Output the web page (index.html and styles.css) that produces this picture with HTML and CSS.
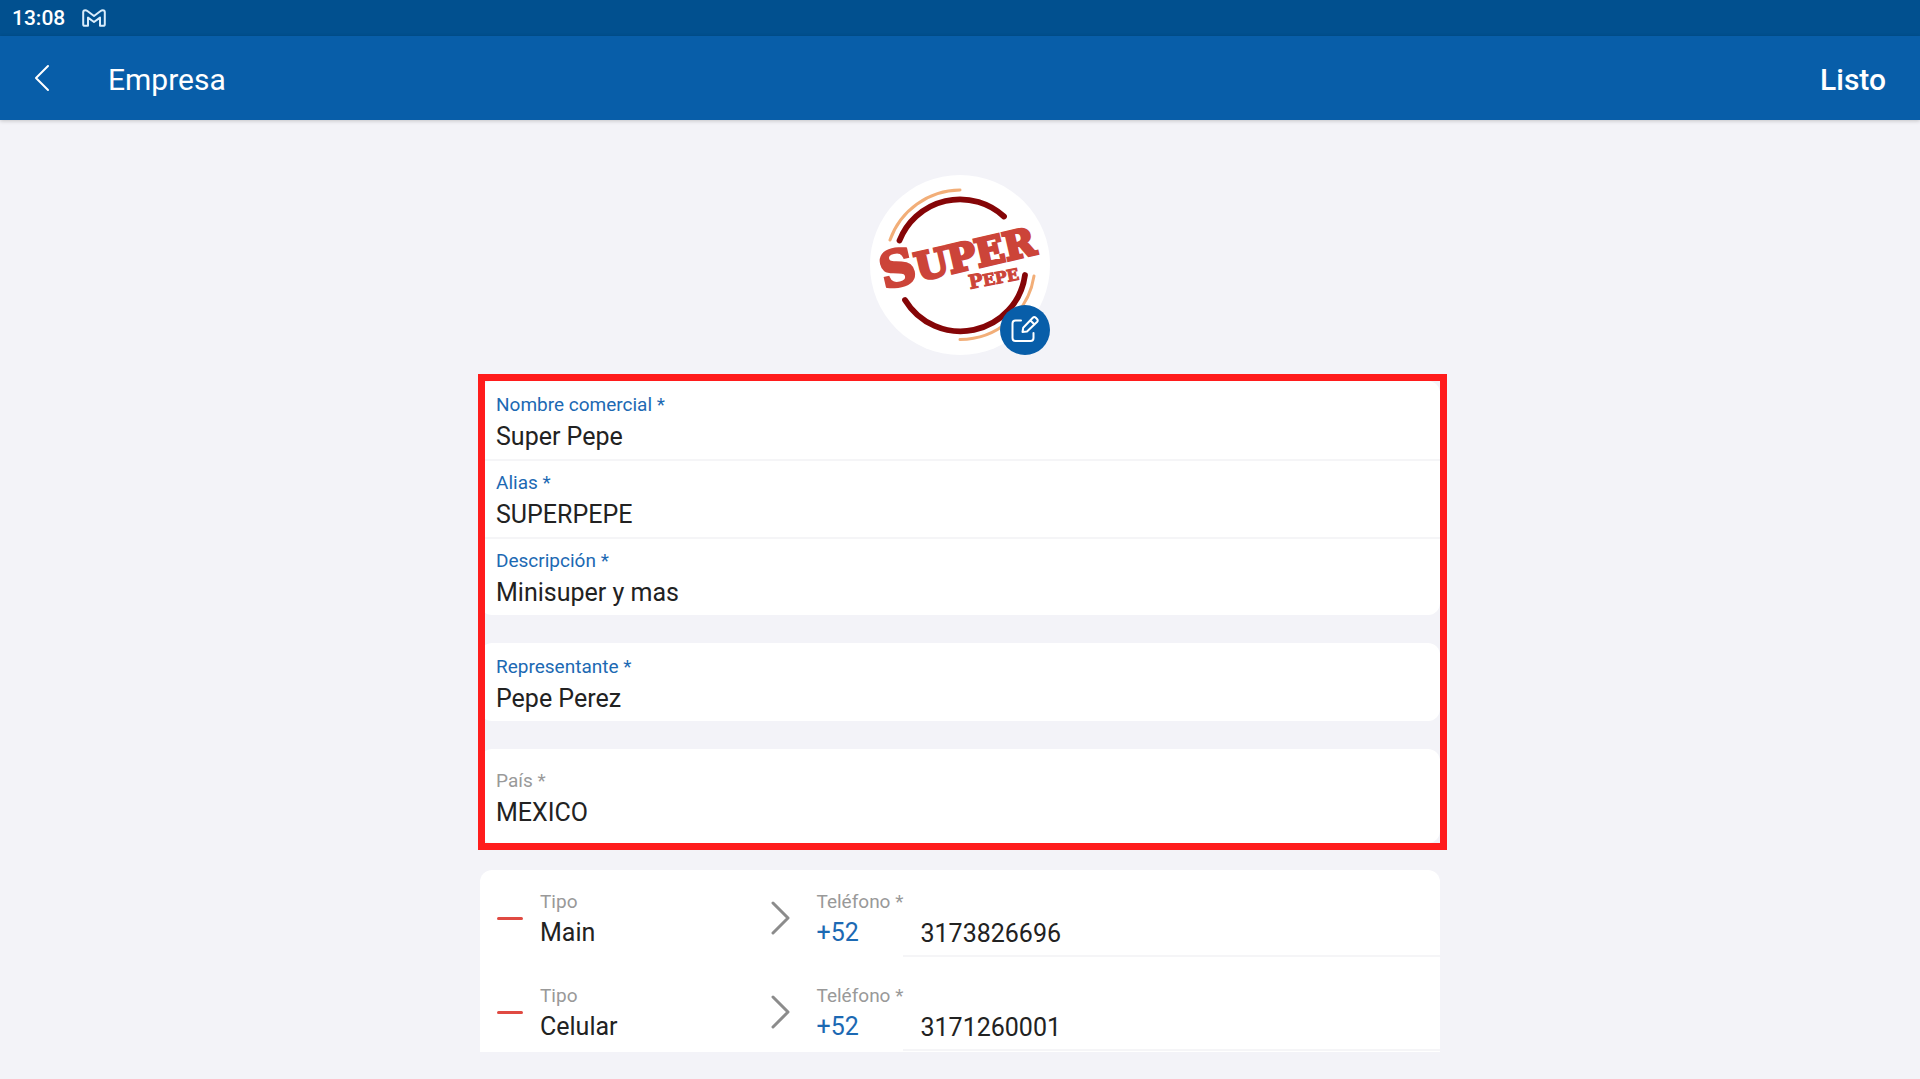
FILE: index.html
```html
<!DOCTYPE html>
<html lang="es">
<head>
    <meta charset="UTF-8">
    <meta name="viewport" content="width=device-width, initial-scale=1.0">
    <title>Empresa</title>
    <link rel="stylesheet" href="styles.css">
</head>
<body>
    <div class="status-bar">
        <span>13:08</span>
        <svg width="24" height="18" viewBox="0 0 24 18" aria-hidden="true">
            <path d="M1.2 3.2Q1.2 1.2 3.2 1.2Q4.4 1.2 5.4 2L12 7L18.6 2Q19.6 1.2 20.8 1.2Q22.8 1.2 22.8 3.2V15.2Q22.8 16.8 21.2 16.8H18V8.6L12 13L6 8.6V16.8H2.8Q1.2 16.8 1.2 15.2Z"/>
        </svg>
    </div>

    <header class="top-bar">
        <button type="button" class="back" aria-label="Volver">
            <svg width="16" height="28" viewBox="0 0 16 28"><path d="M14 2L2 14L14 26"/></svg>
        </button>
        <h1>Empresa</h1>
        <button type="submit" form="companyForm" class="done">Listo</button>
    </header>

    <main>
        <div class="avatar">
            <svg class="logo" viewBox="10 15 180 180" role="img" aria-label="Super Pepe">
                <circle cx="100" cy="105" r="90" fill="#fff"/>
                <g fill="none" stroke-linecap="round">
                    <path d="M39.5 80.5A65 65 0 0 1 144 56.5M45 140A65 65 0 0 0 165 115" stroke="#850507" stroke-width="5.8"/>
                    <path d="M30 80A75 75 0 0 1 100 30M100 179.500A75 75 0 0 0 174 116" stroke="#f2ae78" stroke-width="3"/>
                </g>
                <g class="logo-text">
                    <text transform="translate(24 129) rotate(-13)"><tspan font-size="49">S</tspan><tspan font-size="38">UPER</tspan></text>
                    <text transform="translate(110 129) rotate(-11)" class="small"><tspan font-size="19">P</tspan><tspan font-size="16">EPE</tspan></text>
                </g>
            </svg>
            <button type="button" class="edit" aria-label="Editar logo">
                <svg width="30" height="30" viewBox="0 0 30 30">
                    <path d="M11 5.500H5.500Q2.500 5.500 2.500 8.500V23Q2.500 26 5.500 26H20.500Q23.500 26 23.500 23V18"/>
                    <path d="M12.500 17L13.200 12.800L22.800 2.800Q24.300 1.300 25.800 2.800L27 4Q28.500 5.500 27 7L17 16.500ZM20.500 5.500L24.500 9.500"/>
                </svg>
            </button>
        </div>

        <form id="companyForm">
            <!-- General data -->
            <div class="highlight">
                <div class="card">
                    <div class="field">
                        <label for="name">Nombre comercial *</label>
                        <input type="text" id="name" value="Super Pepe">
                    </div>
                    <div class="field">
                        <label for="alias">Alias *</label>
                        <input type="text" id="alias" value="SUPERPEPE">
                    </div>
                    <div class="field">
                        <label for="description">Descripción *</label>
                        <input type="text" id="description" value="Minisuper y mas">
                    </div>
                </div>
                <div class="card">
                    <div class="field">
                        <label for="owner">Representante *</label>
                        <input type="text" id="owner" value="Pepe Perez">
                    </div>
                </div>
                <div class="card country">
                    <div class="field muted">
                        <label for="country">País *</label>
                        <input type="text" id="country" value="MEXICO">
                    </div>
                </div>
            </div>

            <!-- Phones -->
            <div class="card phones">
                <div class="phone">
                    <button type="button" class="remove" aria-label="Quitar teléfono"></button>
                    <div class="type muted">
                        <label for="type1">Tipo</label>
                        <select id="type1"><option>Main</option><option>Celular</option></select>
                    </div>
                    <svg class="chevron" width="20" height="34" viewBox="0 0 20 34"><path d="M3 2L18 17L3 32"/></svg>
                    <div class="prefix muted">
                        <label for="phone1">Teléfono *</label>
                        <button type="button">+52</button>
                    </div>
                    <input type="tel" id="phone1" value="3173826696">
                </div>
                <div class="phone">
                    <button type="button" class="remove" aria-label="Quitar teléfono"></button>
                    <div class="type muted">
                        <label for="type2">Tipo</label>
                        <select id="type2"><option>Main</option><option selected>Celular</option></select>
                    </div>
                    <svg class="chevron" width="20" height="34" viewBox="0 0 20 34"><path d="M3 2L18 17L3 32"/></svg>
                    <div class="prefix muted">
                        <label for="phone2">Teléfono *</label>
                        <button type="button">+52</button>
                    </div>
                    <input type="tel" id="phone2" value="3171260001">
                </div>
            </div>
        </form>
    </main>
</body>
</html>
```
FILE: styles.css
```css
* {
    box-sizing: border-box;
}

body {
    margin: 0;
    min-height: 100vh;
    background: #f3f3f8;
    color: #222;
    font-family: Roboto, sans-serif;
    font-size: 25px;
}

button, input, select {
    margin: 0;
    padding: 0;
    border: 0;
    background: none;
    color: inherit;
    font: inherit;
    appearance: none;
}

button {
    cursor: pointer;
}

svg {
    display: block;
    fill: none;
    stroke-linecap: round;
    stroke-linejoin: round;
}

.status-bar {
    display: flex;
    align-items: center;
    gap: 17px;
    height: 36px;
    padding: 0 12px;
    background: #01508f;
    color: #fff;
    font-size: 21px;
    font-weight: 500;
}

.status-bar svg {
    stroke: #d9ecfb;
    stroke-width: 2;
}

.top-bar {
    display: flex;
    align-items: center;
    height: 84px;
    padding: 0 34px;
    background: #085ea9;
    color: #fff;
    font-size: 30px;
    box-shadow: 0 1px 4px rgba(0, 0, 0, 0.2);
}

.top-bar h1 {
    flex: 1;
    margin: 0;
    padding-top: 2px;
    font-size: 30px;
    font-weight: 400;
}

.back {
    width: 74px;
}

.back svg {
    stroke: #fff;
    stroke-width: 2;
}

.done {
    padding-top: 2px;
    font-weight: 500;
}

main {
    width: 50%;
    margin: 0 auto;
    padding: 55px 0 28px;
}

/* Logo */
.avatar {
    position: relative;
    width: 180px;
    margin: 0 auto 26px;
}

.logo-text {
    fill: #cc4439;
    stroke: #cc4439;
    stroke-width: 3;
    stroke-linejoin: miter;
    font-family: "DejaVu Serif", serif;
    font-weight: bold;
}

.logo-text .small {
    stroke-width: 1;
}

.edit {
    position: absolute;
    right: 0;
    bottom: 0;
    display: flex;
    align-items: center;
    justify-content: center;
    width: 50px;
    height: 50px;
    border-radius: 50%;
    background: #085ea9;
}

.edit svg {
    stroke: #fff;
    stroke-width: 2;
}

/* Cards */
.highlight {
    position: relative;
    display: grid;
    gap: 28px;
    margin-bottom: 27px;
}

/* Red frame drawn over the cards */
.highlight::after {
    content: "";
    position: absolute;
    inset: -7px -7px -7px -2px;
    border: 7px solid #ff1c1c;
    pointer-events: none;
}

.card {
    padding-top: 2px;
    border-radius: 12px;
    background: #fff;
}

.field {
    padding: 10px 16px 4px;
    border-bottom: 2px solid #f5f5f7;
}

.field:last-child {
    border-bottom: 0;
}

label {
    display: block;
    color: #1c69b3;
    font-size: 19px;
    line-height: 24px;
    white-space: nowrap;
}

.muted label {
    color: #999;
}

.field input {
    display: block;
    width: 100%;
    height: 38px;
}

.country {
    padding: 10px 0 8px;
}

/* Phone rows */
.phones {
    padding-top: 0;
    border-radius: 12px 12px 0 0;
}

.phone {
    display: flex;
    height: 94px;
    padding-left: 17px;
}

.phone:last-child {
    height: 88px;
}

.remove {
    align-self: flex-start;
    width: 26px;
    height: 3px;
    margin: 47px 17px 0 0;
    border-radius: 2px;
    background: #e04a42;
}

.type {
    flex: 1 1 0;
    padding-top: 20px;
}

.type select, .prefix button {
    display: block;
    height: 38px;
    line-height: 38px;
}

.type select {
    width: 100%;
}

.chevron {
    margin: 31px 27px 0 0;
    stroke: #8c8c8c;
    stroke-width: 3;
}

.prefix {
    width: 86px;
    padding-top: 20px;
}

.prefix button {
    color: #1c69b3;
}

.phone input {
    width: 57%;
    height: 87px;
    padding: 42px 0 0 18px;
    border-bottom: 2px solid #f5f5f7;
}
```
